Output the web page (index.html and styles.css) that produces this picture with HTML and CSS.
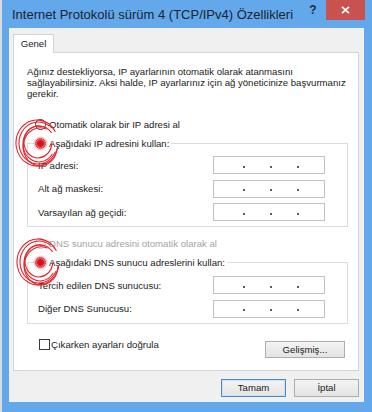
FILE: index.html
```html
<!DOCTYPE html>
<html lang="tr">
<head>
<meta charset="utf-8">
<title>Internet Protokolü sürüm 4 (TCP/IPv4) Özellikleri</title>
<link rel="stylesheet" href="styles.css">
</head>
<body>
<div class="window">
  <div class="titlebar">
    <span class="title">Internet Protokolü sürüm 4 (TCP/IPv4) Özellikleri</span>
    <span class="help">?</span>
    <span class="close">
      <svg width="9" height="8" viewBox="0 0 9 8"><path d="M1 0.8 L8 7.2 M8 0.8 L1 7.2" stroke="#fff" stroke-width="1.7" fill="none"/></svg>
    </span>
  </div>
  <div class="client">
    <div class="tabs"><div class="tab">Genel</div></div>
    <div class="panel">
      <p class="intro">Ağınız destekliyorsa, IP ayarlarının otomatik olarak atanmasını sağlayabilirsiniz. Aksi halde, IP ayarlarınız için ağ yöneticinize başvurmanız gerekir.</p>

      <div class="radio-row first"><span class="radio"></span><span>Otomatik olarak bir IP adresi al</span></div>
      <fieldset class="group">
        <legend><span class="legend-in"><span class="radio checked"></span><span>Aşağıdaki IP adresini kullan:</span></span></legend>
        <div class="rows">
          <div class="field"><span>IP adresi:</span><span class="ip"><i></i><i></i><i></i></span></div>
          <div class="field"><span>Alt ağ maskesi:</span><span class="ip"><i></i><i></i><i></i></span></div>
          <div class="field"><span>Varsayılan ağ geçidi:</span><span class="ip"><i></i><i></i><i></i></span></div>
        </div>
      </fieldset>

      <div class="radio-row disabled"><span class="radio"></span><span>DNS sunucu adresini otomatik olarak al</span></div>
      <fieldset class="group">
        <legend><span class="legend-in"><span class="radio checked"></span><span>Aşağıdaki DNS sunucu adreslerini kullan:</span></span></legend>
        <div class="rows dns">
          <div class="field"><span>Tercih edilen DNS sunucusu:</span><span class="ip"><i></i><i></i><i></i></span></div>
          <div class="field"><span>Diğer DNS Sunucusu:</span><span class="ip"><i></i><i></i><i></i></span></div>
        </div>
      </fieldset>

      <div class="footer">
        <label class="check"><span class="box"></span><span>Çıkarken ayarları doğrula</span></label>
        <button class="btn adv">Gelişmiş...</button>
      </div>

      <svg class="scribble s1" width="50" height="50" viewBox="0 0 50 50">
        <g fill="none" stroke="#e3232b" stroke-width="1.1" stroke-linecap="round">
          <path d="M35.9 7.8 A19 21 0 1 0 42.2 33.9"/>
          <path d="M38.3 14.4 A16 18 0 1 0 39.1 36.3"/>
          <path d="M28.6 8.5 A14 16 0 1 0 38.9 25.4"/>
          <path d="M42.2 13.5 A21 23 0 1 0 44.7 29"/>
          <path d="M33 11 A17 19 0 1 0 44 31"/>
        </g>
      </svg>
      <svg class="scribble s2" width="50" height="50" viewBox="0 0 50 50">
        <g fill="none" stroke="#e3232b" stroke-width="1.1" stroke-linecap="round">
          <path d="M35.9 7.8 A19 21 0 1 0 42.2 33.9"/>
          <path d="M38.3 14.4 A16 18 0 1 0 39.1 36.3"/>
          <path d="M28.6 8.5 A14 16 0 1 0 38.9 25.4"/>
          <path d="M42.2 13.5 A21 23 0 1 0 44.7 29"/>
          <path d="M33 11 A17 19 0 1 0 44 31"/>
        </g>
      </svg>
    </div>
    <div class="actions">
      <button class="btn default">Tamam</button>
      <button class="btn">İptal</button>
    </div>
  </div>
</div>
</body>
</html>
```
FILE: styles.css
```css
* { box-sizing: border-box; }
html, body { margin: 0; padding: 0; }
body {
  background: #d9dde2;
  font-family: "Liberation Sans", Arial, sans-serif;
  font-size: 9.6px;
  color: #1b1b1b;
  width: 372px;
  height: 412px;
  overflow: hidden;
}
.window {
  width: 370px;
  height: 412px;
  margin-left: 2px;
  background: #62a8ea;
  display: flex;
  flex-direction: column;
}
.titlebar {
  height: 28px;
  flex-shrink: 0;
  display: flex;
  align-items: flex-start;
}
.title {
  flex: 1;
  font-size: 13px;
  line-height: 16px;
  padding: 7px 0 0 10px;
  color: #1c2430;
  white-space: nowrap;
}
.help {
  width: 14px;
  margin: 3px 6px 0 0;
  text-align: center;
  font-weight: bold;
  font-size: 12px;
  line-height: 14px;
  color: #1d2a3a;
}
.close {
  width: 39px;
  height: 20px;
  margin-right: 7px;
  background: #c9514f;
  display: flex;
  align-items: center;
  justify-content: center;
}
.client {
  flex: 1;
  margin: 0 8px 10px 7px;
  background: #f0f0f0;
  display: flex;
  flex-direction: column;
}
.tabs {
  display: flex;
  padding: 6px 0 0 4px;
}
.tab {
  width: 41px;
  height: 19px;
  margin-bottom: -1px;
  border: 1px solid #d4d4d4;
  border-bottom: none;
  background: #fff;
  text-align: center;
  line-height: 17px;
  position: relative;
  z-index: 1;
}
.panel {
  position: relative;
  height: 319px;
  margin: 0 5px 0 4px;
  border: 1px solid #d4d4d4;
  background: #fff;
  display: flex;
  flex-direction: column;
}
.intro {
  margin: 13px 10px 0 13px;
  line-height: 11px;
}
.radio-row {
  display: flex;
  align-items: center;
  gap: 3px;
  height: 13px;
  margin-left: 21px;
}
.radio-row.first { margin-top: 18.5px; }
.radio-row.disabled { margin-top: 9.5px; color: #a3a3a3; }
.radio {
  width: 11px;
  height: 11px;
  border-radius: 50%;
  border: 1px solid #3a3a3a;
  background: #fff;
  flex-shrink: 0;
}
.radio-row.disabled .radio {
  border-color: #c4c4c4;
  background: #f2f2f2;
}
.radio.checked {
  background: radial-gradient(circle, #d8121c 0 3px, #ee5860 3.5px 4.3px, #f6b9bc 4.8px);
  border-color: #c13a40;
  box-shadow: 0 0 2px 1px rgba(232, 60, 70, 0.45);
}
.group {
  margin: 6px 10px 0 13px;
  padding: 0 0 5px 0;
  border: 1px solid #dcdcdc;
  min-width: 0;
}
.group legend {
  margin-left: 6px;
  padding: 0 2px 0 1px;
  height: 13px;
  line-height: 13px;
}
.legend-in {
  display: inline-flex;
  align-items: center;
  gap: 3px;
  height: 13px;
  vertical-align: top;
}
.rows {
  display: flex;
  flex-direction: column;
  gap: 5.5px;
  padding: 6.5px 22px 0 10px;
}
.rows.dns { padding-top: 7.5px; }
.field {
  height: 18px;
  display: flex;
  align-items: center;
  justify-content: space-between;
}
.ip {
  width: 112px;
  height: 18px;
  border: 1px solid #c2c2c2;
  display: flex;
  align-items: center;
  gap: 25px;
  padding-left: 29px;
  background: #fff;
}
.ip i {
  display: block;
  width: 2px;
  height: 2px;
  margin-top: 3px;
  background: #5c5c5c;
}
.footer {
  display: flex;
  justify-content: space-between;
  align-items: flex-start;
  margin: 15px 13px 0 25px;
}
.check {
  display: flex;
  align-items: center;
  gap: 1px;
  height: 11px;
}
.box {
  width: 11px;
  height: 11px;
  border: 1px solid #3a3a3a;
  background: #fff;
}
.btn {
  font-family: "Liberation Sans", Arial, sans-serif;
  font-size: 9.6px;
  color: #1b1b1b;
  width: 65px;
  height: 18px;
  padding: 0;
  border: 1px solid #adadad;
  background: linear-gradient(#f3f3f3, #e4e4e4);
  line-height: 16px;
}
.btn.adv {
  width: 80px;
  height: 17px;
  margin-top: 2px;
}
.btn.default {
  border-color: #4b8ac4;
  box-shadow: inset 0 0 0 1px #c8e1f6;
}
.actions {
  display: flex;
  justify-content: flex-end;
  gap: 8px;
  margin: 8px 5px 0 0;
}
.scribble {
  position: absolute;
  pointer-events: none;
}
.s1 { left: -1px; top: 65px; }
.s2 { left: 0; top: 184px; }
```
